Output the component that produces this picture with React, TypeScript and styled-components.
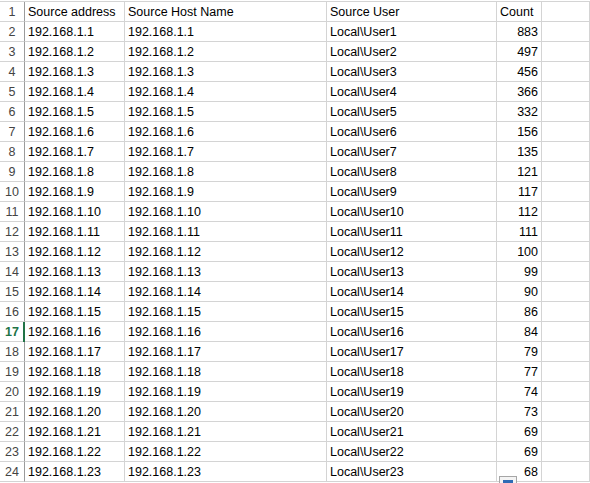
import React from "react";
import styled, { createGlobalStyle } from "styled-components";

const GlobalStyle = createGlobalStyle`
  html, body {
    margin: 0;
    padding: 0;
    background: #ffffff;
  }
  body {
    font-family: "Liberation Sans", Arial, sans-serif;
  }
`;

const Sheet = styled.div`
  position: relative;
  width: 590px;
  height: 483px;
  overflow: hidden;
  padding-top: 1px;
  box-sizing: border-box;
  background: #ffffff;
`;

const Grid = styled.div`
  display: grid;
  grid-template-columns: 25px 100px 202px 170px 45px 48px;
  grid-auto-rows: 20px;
  border-top: 1px solid #d4d4d4;
`;

const Cell = styled.div<{ $align?: "left" | "right" }>`
  box-sizing: border-box;
  height: 20px;
  border-right: 1px solid #d4d4d4;
  border-bottom: 1px solid #d4d4d4;
  padding: 1px 3px 0 3px;
  font-size: 12.5px;
  line-height: 18px;
  color: #000000;
  white-space: nowrap;
  overflow: hidden;
  text-align: ${(p) => (p.$align === "right" ? "right" : "left")};
`;

const RowHead = styled.div<{ $active?: boolean }>`
  position: relative;
  box-sizing: border-box;
  height: 20px;
  border-right: 1px solid #9b9b9b;
  border-bottom: 1px solid #d4d4d4;
  padding-top: 1px;
  font-size: 12.5px;
  line-height: 18px;
  text-align: center;
  color: ${(p) => (p.$active ? "#217346" : "#444444")};
  font-weight: ${(p) => (p.$active ? "bold" : "normal")};

  &::after {
    content: "";
    display: ${(p) => (p.$active ? "block" : "none")};
    position: absolute;
    right: -1px;
    top: 0;
    bottom: -1px;
    width: 2px;
    background: #217346;
  }
`;

const QuickAnalysis = styled.div`
  position: absolute;
  left: 499px;
  top: 476px;
  width: 16px;
  height: 14px;
  border: 1px solid #a6a6a6;
  background: #f4f4f4;

  &::before {
    content: "";
    position: absolute;
    left: 3px;
    top: 3px;
    width: 10px;
    height: 8px;
    background: #2f6bb5;
  }
`;

const counts = [
  883, 497, 456, 366, 332, 156, 135, 121, 117, 112, 111, 100, 99, 90, 86, 84,
  79, 77, 74, 73, 69, 69, 68,
];

const rows = counts.map((count, i) => ({
  ip: `192.168.1.${i + 1}`,
  user: `Local\\User${i + 1}`,
  count,
}));

const App = () => {
  return (
    <>
      <GlobalStyle />
      <Sheet>
        <Grid>
          <RowHead>1</RowHead>
          <Cell>Source address</Cell>
          <Cell>Source Host Name</Cell>
          <Cell>Source User</Cell>
          <Cell>Count</Cell>
          <Cell />
          {rows.map((r, i) => (
            <React.Fragment key={r.ip}>
              <RowHead $active={i + 2 === 17}>{i + 2}</RowHead>
              <Cell>{r.ip}</Cell>
              <Cell>{r.ip}</Cell>
              <Cell>{r.user}</Cell>
              <Cell $align="right">{r.count}</Cell>
              <Cell />
            </React.Fragment>
          ))}
        </Grid>
        <QuickAnalysis />
      </Sheet>
    </>
  );
};

export default App;
